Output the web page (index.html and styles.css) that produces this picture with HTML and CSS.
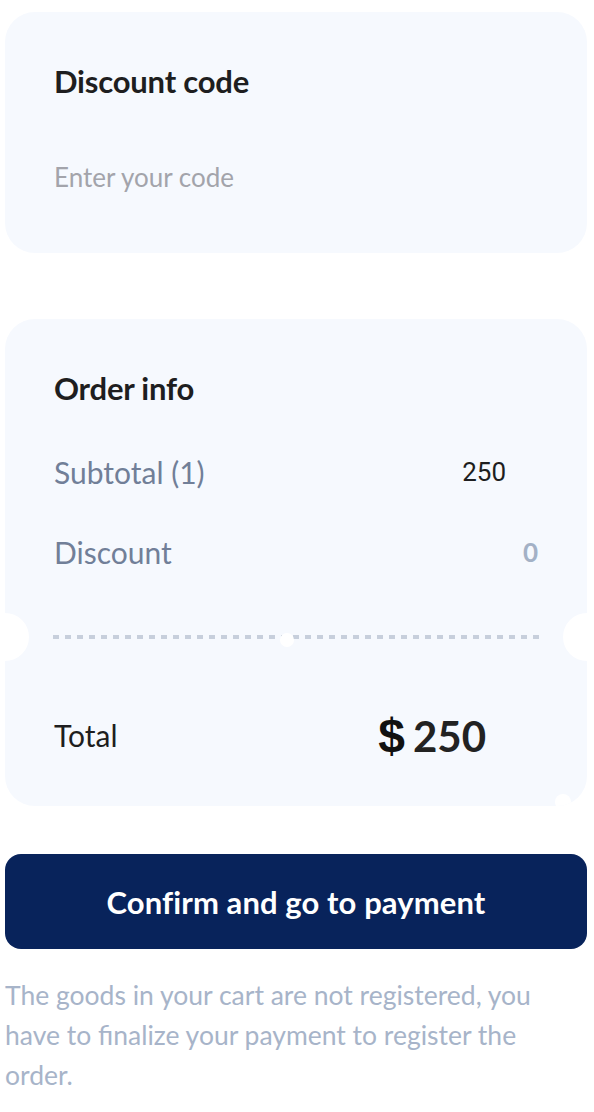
FILE: index.html
```html
<!DOCTYPE html>
<html lang="en">
<head>
<meta charset="utf-8">
<title>Checkout</title>
<link rel="stylesheet" href="styles.css">
</head>
<body>
<main class="page">
  <section class="card code-card">
    <h2 class="card-title">Discount code</h2>
    <input class="code-input" type="text" placeholder="Enter your code">
  </section>

  <section class="card order-card">
    <h2 class="card-title">Order info</h2>
    <div class="row row-subtotal">
      <span class="label">Subtotal (1)</span>
      <span class="value value-subtotal">250</span>
    </div>
    <div class="row row-discount">
      <span class="label">Discount</span>
      <span class="value value-discount">0</span>
    </div>
    <div class="divider">
      <span class="notch notch-left"></span>
      <span class="dash-line"></span>
      <span class="dot dot-center"></span>
      <span class="notch notch-right"></span>
    </div>
    <div class="row row-total">
      <span class="total-label">Total</span>
      <span class="total-value"><span class="currency">$</span><span class="amount">250</span></span>
    </div>
    <span class="dot dot-corner"></span>
  </section>

  <button class="confirm-btn" type="button">Confirm and go to payment</button>

  <p class="note">The goods in your cart are not registered, you have to finalize your payment to register the order.</p>
</main>
</body>
</html>
```

FILE: styles.css
```css
* { box-sizing: border-box; }

html, body {
  margin: 0;
  padding: 0;
  background: #ffffff;
}

body {
  font-family: "Lato", "Noto Sans", "Liberation Sans", sans-serif;
  color: #1d1d1f;
}

.page {
  width: 594px;
  padding: 12px 7px 0 5px;
  display: flex;
  flex-direction: column;
}

.card {
  background: #f6f9fe;
  border-radius: 30px;
  position: relative;
  overflow: hidden;
  display: flex;
  flex-direction: column;
}

.card-title {
  margin: 0;
  font-size: 31px;
  line-height: 36px;
  font-weight: 700;
  color: #1e1e20;
  letter-spacing: -0.2px;
}

.code-card {
  height: 241px;
  padding: 51px 49px 0 49px;
}

.code-input {
  margin-top: 60px;
  border: 0;
  background: transparent;
  padding: 0;
  font-family: inherit;
  font-size: 26px;
  line-height: 36px;
  height: 36px;
  color: #1e1e20;
  outline: none;
  width: 100%;
}

.code-input::placeholder {
  color: #a3a4ab;
}

.order-card {
  margin-top: 66px;
  height: 487px;
  padding: 51px 0 0 49px;
}

.row {
  display: flex;
  justify-content: space-between;
  align-items: center;
  height: 36px;
}

.row-subtotal { margin-top: 48px; padding-right: 81px; }
.row-discount { margin-top: 44px; padding-right: 49px; }

.label {
  font-size: 30px;
  line-height: 36px;
  color: #717f98;
}

.value-subtotal {
  font-family: "Roboto", "Liberation Sans", sans-serif;
  font-size: 26px;
  color: #1e1e20;
}

.value-discount {
  font-size: 26px;
  font-weight: 700;
  color: #a3b1c6;
}

.divider {
  position: relative;
  height: 12px;
  margin-top: 61px;
  margin-left: -49px;
  display: flex;
  align-items: center;
  padding: 0 48px 0 48px;
}

.dash-line {
  flex: 1;
  height: 4px;
  background-image: linear-gradient(to right, #c7cfdc 0 6px, transparent 6px 12px);
  background-size: 12px 4px;
  background-repeat: repeat-x;
}

.notch {
  position: absolute;
  top: 50%;
  width: 48px;
  height: 48px;
  margin-top: -24px;
  border-radius: 50%;
  background: #ffffff;
}

.notch-left { left: -24px; }
.notch-right { right: -24px; }

.dot {
  position: absolute;
  border-radius: 50%;
  background: #ffffff;
}

.dot-center {
  width: 14px;
  height: 14px;
  left: 275px;
  top: 2px;
}

.dot-corner {
  width: 16px;
  height: 16px;
  left: 550px;
  bottom: -4px;
}

.row-total {
  margin-top: 70px;
  height: 44px;
  padding-right: 101px;
}

.total-label {
  font-size: 30px;
  line-height: 36px;
  color: #1e1e20;
}

.total-value {
  display: flex;
  align-items: baseline;
  gap: 8px;
}

.currency {
  font-family: "Liberation Sans", "Arial", sans-serif;
  font-weight: 700;
  font-size: 48px;
  color: #111111;
}

.amount {
  font-weight: 700;
  font-size: 42px;
  color: #222222;
}

.confirm-btn {
  margin-top: 48px;
  height: 95px;
  border: 0;
  border-radius: 16px;
  background: #08235b;
  color: #ffffff;
  font-family: inherit;
  font-size: 31px;
  font-weight: 700;
  letter-spacing: 0.1px;
  cursor: pointer;
}

.note {
  margin: 26px 0 0 0;
  padding-right: 30px;
  font-size: 26.5px;
  line-height: 40px;
  color: #a7b4c9;
}
```
